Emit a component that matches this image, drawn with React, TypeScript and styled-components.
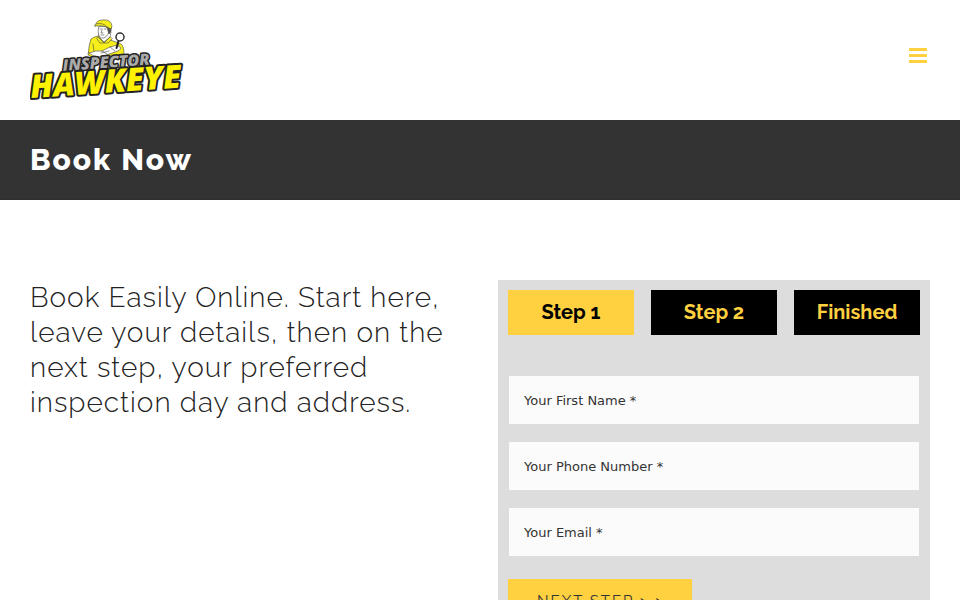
import React from "react";
import styled, { createGlobalStyle } from "styled-components";

const GlobalStyle = createGlobalStyle`
  *, *::before, *::after { box-sizing: border-box; }
  body {
    margin: 0;
    background: #fff;
    color: #333;
    font-family: Raleway, Lato, "Open Sans", sans-serif;
  }
`;

const Header = styled.header`
  display: flex;
  align-items: center;
  justify-content: space-between;
  padding: 10px 30px;
`;

const HomeLink = styled.a`
  display: block;
  line-height: 0;
`;

const MenuButton = styled.button`
  display: flex;
  padding: 0 3px;
  margin-bottom: 8px;
  border: 0;
  background: none;
  color: #ffd040;
  cursor: pointer;
`;

const TitleBar = styled.div`
  display: flex;
  align-items: center;
  min-height: 80px;
  padding: 0 30px;
  background: #333;
  border-bottom: 1px solid #2f2f2f;
`;

const Title = styled.h1`
  margin: 0;
  color: #fff;
  font-size: 30px;
  font-weight: 800;
  line-height: 40px;
  letter-spacing: 2px;
`;

const Main = styled.main`
  display: grid;
  grid-template-columns: 1fr 1fr;
  align-items: start;
  gap: 36px;
  padding: 80px 30px;
`;

const Intro = styled.p`
  margin: 0;
  color: #222;
  font-size: 28px;
  font-weight: 300;
  line-height: 35px;
  letter-spacing: 1px;
`;

const Form = styled.form`
  padding: 10px;
  background: #ddd;
`;

const Steps = styled.ol`
  display: grid;
  grid-template-columns: repeat(3, 1fr);
  gap: 17px;
  margin: 0 0 41px;
  padding: 0;
  list-style: none;
`;

const Step = styled.li<{ $current?: boolean }>`
  background: ${(p) => (p.$current ? "#ffd040" : "#000")};
  color: ${(p) => (p.$current ? "#000" : "#ffd040")};
  font-size: 20px;
  font-weight: 700;
  line-height: 45px;
  text-align: center;
`;

const Fields = styled.div`
  display: grid;
  gap: 18px;
  padding: 0 1px;
  margin-bottom: 23px;
`;

const Field = styled.input`
  width: 100%;
  height: 48px;
  padding: 0 15px;
  border: 0;
  border-radius: 0;
  background: #fbfbfb;
  color: #333;
  font-family: "DejaVu Sans", sans-serif;
  font-size: 13px;

  &::placeholder {
    color: #333;
    opacity: 1;
  }
`;

const NextButton = styled.button`
  padding: 0 27px 0 29px;
  border: 0;
  background: #ffd040;
  color: #333;
  font-family: inherit;
  font-size: 15px;
  line-height: 44px;
  letter-spacing: 2px;
  cursor: pointer;
`;

const LogoWord = styled.text`
  font-family: "Open Sans", sans-serif;
  font-style: italic;
  font-weight: 800;
  paint-order: stroke;
  stroke: #222;
  stroke-linejoin: round;
`;

function Logo() {
  return (
    <svg width="156" height="100" viewBox="30 10 156 100" role="img" aria-label="Inspector Hawkeye">
      <g stroke="#444" strokeWidth="0.6" strokeLinejoin="round" strokeLinecap="round">
        <path
          d="M98 36q-5 1-7 3-2 5-3 16l4 2 32-3q0-8-3-10-5-2-11-4 0-2-3-3z"
          fill="#f5ee1b"
        />
        <path d="M99 33l0 4 5 5 6-5 1-5z" fill="#fff" />
        <path d="M98 37l6 6-4 0-3-4zM110 37l-6 6 4 0 4-4z" fill="#f5ee1b" />
        <path d="M98.500 27q-1 5 .5 9 2 3 5 2 5-2 6-11z" fill="#fff" />
        <path d="M107 27l4 0q1 4-2 7l-1-3z" fill="#555" />
        <path d="M95 26q-1-1 1-2 1-4 7-4 8-1 9 6l-1 3-4-2q-6-2-12-1z" fill="#f5ee1b" />
        <path d="M96 24q7-2 11 3" fill="none" />
        <path d="M100 29l2 0m2 0l2 0m-4 1l-1 3 2 0m-2 2l3 0" fill="none" />
        <path d="M89 53q7-3 13-2l8-4 7-2 4 3q-1 3-6 4l-9 3-8 2q-6-1-9-4z" fill="#fff" />
        <path d="M102 51l5 3m3-7l5 4m-14 2l8-2M93 44l1 7m23-8l2 2" fill="none" />
        <path d="M118.500 41l-2 7" fill="none" stroke="#222" strokeWidth="2" />
        <circle cx="120" cy="37" r="4" fill="#fff" stroke="#333" strokeWidth="1.5" />
      </g>
      <g transform="rotate(-4 62 71)">
        <LogoWord x="63" y="71" fontSize="16" fill="#aaa" strokeWidth="3">
          INSPECTOR
        </LogoWord>
      </g>
      <g transform="rotate(-4 31 98)">
        <LogoWord x="31" y="98" fontSize="32" fill="#fff200" strokeWidth="4">
          HAWKEYE
        </LogoWord>
      </g>
    </svg>
  );
}

function MenuIcon() {
  return (
    <svg width="18" height="16" viewBox="0 0 18 16" fill="currentColor" aria-hidden="true">
      <rect y="0" width="18" height="3" rx="0.5" />
      <rect y="6" width="18" height="3" rx="0.5" />
      <rect y="12" width="18" height="3" rx="0.5" />
    </svg>
  );
}

const fields = [
  { name: "firstName", label: "Your First Name *", type: "text" },
  { name: "phone", label: "Your Phone Number *", type: "tel" },
  { name: "email", label: "Your Email *", type: "email" },
];

export default function App() {
  return (
    <>
      <GlobalStyle />
      <Header>
        <HomeLink href="#">
          <Logo />
        </HomeLink>
        <MenuButton type="button" aria-label="Menu">
          <MenuIcon />
        </MenuButton>
      </Header>
      <TitleBar>
        <Title>Book Now</Title>
      </TitleBar>
      <Main>
        <Intro>
          Book Easily Online. Start here, leave your details, then on the next step, your preferred
          inspection day and address.
        </Intro>
        <Form>
          <Steps>
            <Step $current aria-current="step">
              Step 1
            </Step>
            <Step>Step 2</Step>
            <Step>Finished</Step>
          </Steps>
          <Fields>
            {fields.map((f) => (
              <Field key={f.name} name={f.name} type={f.type} placeholder={f.label} aria-label={f.label} />
            ))}
          </Fields>
          <NextButton type="button">NEXT STEP &gt; &gt;</NextButton>
        </Form>
      </Main>
    </>
  );
}
